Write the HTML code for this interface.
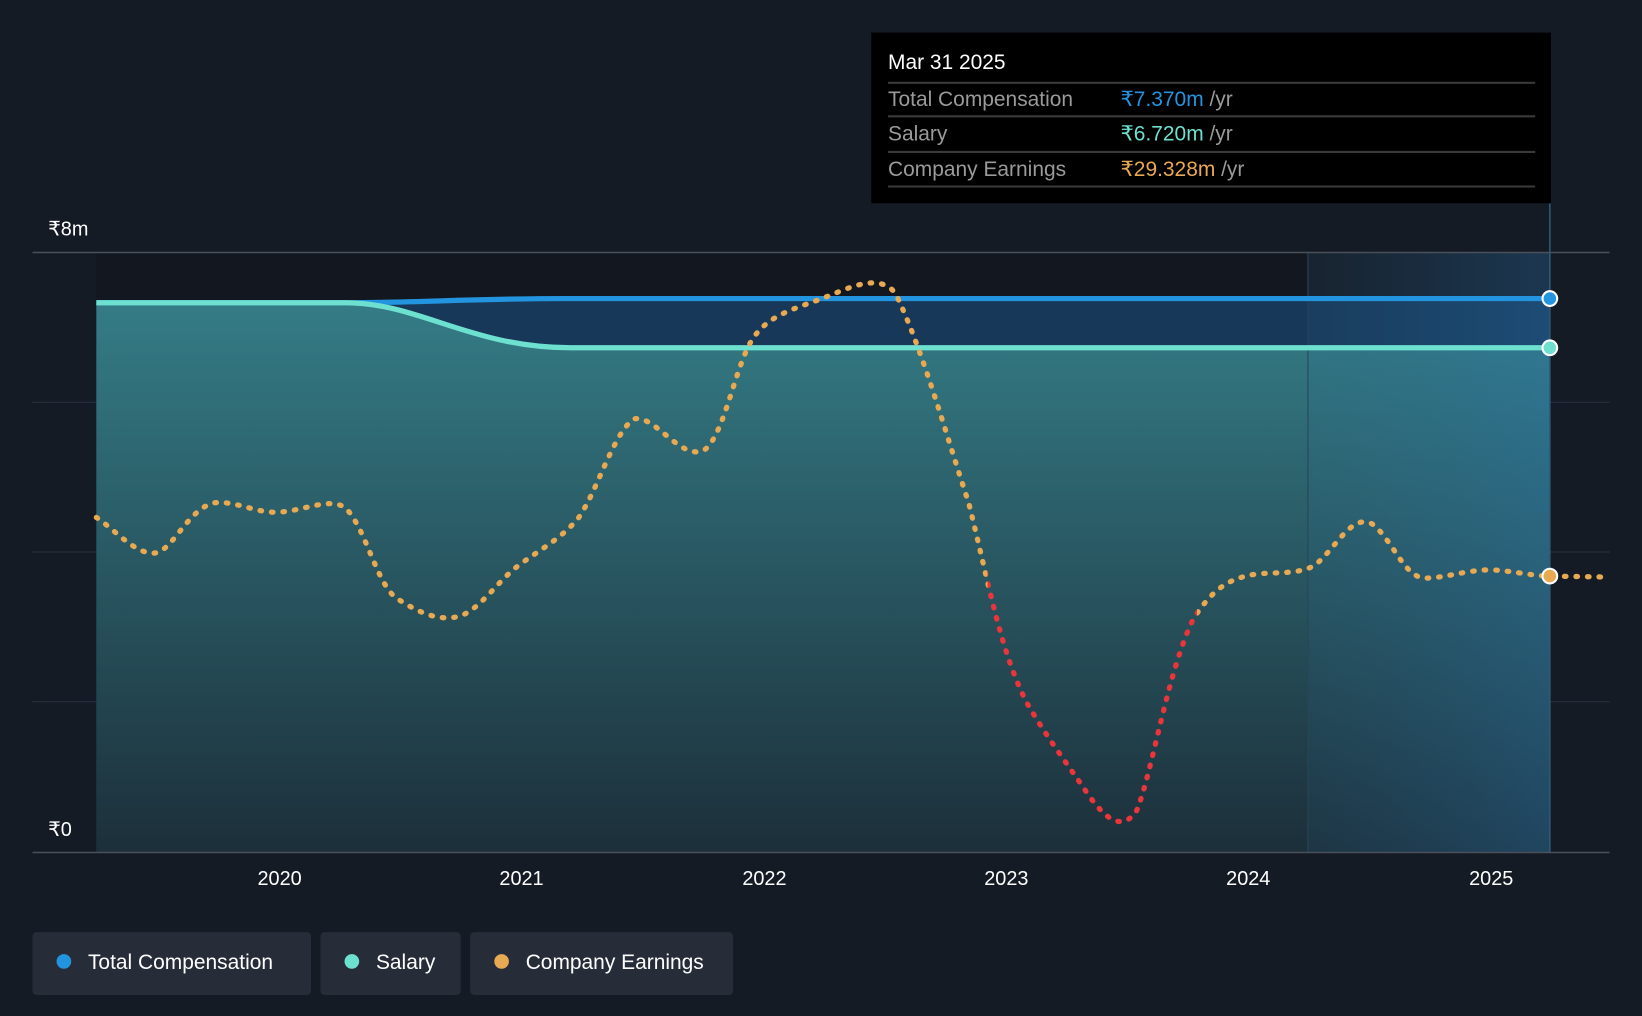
<!DOCTYPE html>
<html><head><meta charset="utf-8"><style>
html,body{margin:0;padding:0;background:#151b24;}
svg{display:block;}
text{font-family:"Liberation Sans",sans-serif;}
</style></head><body>
<svg width="1642" height="1016" viewBox="0 0 1568 970" xmlns="http://www.w3.org/2000/svg">
<defs>
<linearGradient id="sal" x1="0" y1="0" x2="0" y2="1">
<stop offset="0" stop-color="#347c86"/><stop offset="1" stop-color="#1c2f3a"/></linearGradient>
<linearGradient id="hl" x1="0" y1="0" x2="1" y2="0">
<stop offset="0" stop-color="#2a6ea0" stop-opacity="0.1"/><stop offset="1" stop-color="#2a7ab8" stop-opacity="0.3"/></linearGradient>
<clipPath id="red" clipPathUnits="userSpaceOnUse"><rect x="943" y="0" width="200" height="970"/></clipPath>
<clipPath id="org" clipPathUnits="userSpaceOnUse"><rect x="0" y="0" width="943" height="970"/><rect x="1143" y="0" width="425" height="970"/></clipPath>
</defs>
<rect width="1568" height="970" fill="#151b24"/>
<rect x="92" y="241" width="1157" height="573" fill="#131820"/>
<g stroke="#2a3340" stroke-width="1">
<line x1="31" y1="384" x2="1537" y2="384"/><line x1="31" y1="527" x2="1537" y2="527"/><line x1="31" y1="670" x2="1537" y2="670"/>
</g>
<path d="M92 289 L330 289 C400 289 450 285 540 285 L1480 285 L1480 814 L92 814Z" fill="#173858"/>
<path d="M92 289 L330 289 C400 289 450 332 545 332 L1480 332 L1480 814 L92 814Z" fill="url(#sal)"/>
<rect x="1249" y="241" width="231" height="573" fill="url(#hl)"/>
<line x1="1249" y1="241" x2="1249" y2="814" stroke="#2a4458"/>
<line x1="31" y1="241" x2="1537" y2="241" stroke="#4a505a" stroke-width="1.5"/>
<line x1="31" y1="814" x2="1537" y2="814" stroke="#4a505a" stroke-width="1.5"/>
<line x1="1480" y1="194" x2="1480" y2="814" stroke="#2e5a78" stroke-width="1.5"/>
<path d="M92 289 L330 289 C400 289 450 285 540 285 L1480 285" fill="none" stroke="#2394e0" stroke-width="5"/>
<path d="M92 289 L330 289 C400 289 450 332 545 332 L1480 332" fill="none" stroke="#6de0d0" stroke-width="5"/>
<g fill="none" stroke-width="5" stroke-linecap="round" stroke-dasharray="1.5 9.5">
<g clip-path="url(#org)">
<path d="M92 494 C110 506 130 530 148 528 C165 526 180 485 205 480 C225 478 245 490 265 489 C290 488 315 474 330 485 C350 505 360 560 380 572 C400 585 420 594 440 588 C460 580 475 555 495 540 C515 525 535 515 552 495 C570 470 585 415 605 400 C625 395 650 440 672 430 C690 418 700 360 715 330 C730 300 760 295 790 283 C810 275 840 260 855 280 C880 330 905 420 925 480 C945 560 955 620 980 670 C1000 705 1020 730 1040 760 C1055 780 1070 795 1085 775 C1100 740 1115 640 1140 590 C1160 560 1175 552 1200 548 C1225 546 1240 548 1255 540 C1275 525 1290 490 1310 500 C1330 515 1340 550 1360 552 C1380 552 1400 544 1425 544 C1450 546 1465 550 1480 550 L1537 551" stroke="#e8a953"/>
</g>
<g clip-path="url(#red)">
<path d="M92 494 C110 506 130 530 148 528 C165 526 180 485 205 480 C225 478 245 490 265 489 C290 488 315 474 330 485 C350 505 360 560 380 572 C400 585 420 594 440 588 C460 580 475 555 495 540 C515 525 535 515 552 495 C570 470 585 415 605 400 C625 395 650 440 672 430 C690 418 700 360 715 330 C730 300 760 295 790 283 C810 275 840 260 855 280 C880 330 905 420 925 480 C945 560 955 620 980 670 C1000 705 1020 730 1040 760 C1055 780 1070 795 1085 775 C1100 740 1115 640 1140 590 C1160 560 1175 552 1200 548 C1225 546 1240 548 1255 540 C1275 525 1290 490 1310 500 C1330 515 1340 550 1360 552 C1380 552 1400 544 1425 544 C1450 546 1465 550 1480 550 L1537 551" stroke="#e8363c"/>
</g>
</g>
<circle cx="1480" cy="285" r="7" fill="#2394e0" stroke="#fff" stroke-width="2"/>
<circle cx="1480" cy="332" r="7" fill="#6de0d0" stroke="#fff" stroke-width="2"/>
<circle cx="1480" cy="550" r="7" fill="#e8a953" stroke="#fff" stroke-width="2"/>
<text x="46" y="225" fill="#fff" font-size="19">₹8m</text>
<text x="46" y="798" fill="#fff" font-size="19">₹0</text>
<g fill="#fff" font-size="19" text-anchor="middle">
<text x="267" y="845">2020</text><text x="498" y="845">2021</text><text x="730" y="845">2022</text>
<text x="961" y="845">2023</text><text x="1192" y="845">2024</text><text x="1424" y="845">2025</text>
</g>
<rect x="832" y="31" width="649" height="163" fill="#000"/>
<text x="848" y="66" fill="#fff" font-size="20">Mar 31 2025</text>
<g stroke="#3a3a3a" stroke-width="2"><line x1="848" y1="79" x2="1466" y2="79"/><line x1="848" y1="111" x2="1466" y2="111"/><line x1="848" y1="145" x2="1466" y2="145"/><line x1="848" y1="178" x2="1466" y2="178"/></g>
<g font-size="20" fill="#9a9a9a">
<text x="848" y="101">Total Compensation</text><text x="848" y="134">Salary</text><text x="848" y="168">Company Earnings</text>
<text x="1070" y="101"><tspan fill="#2394e0">₹7.370m</tspan> /yr</text>
<text x="1070" y="134"><tspan fill="#6de0d0">₹6.720m</tspan> /yr</text>
<text x="1070" y="168"><tspan fill="#e8a953">₹29.328m</tspan> /yr</text>
</g>
<g font-size="20" fill="#fff">
<rect x="31" y="890" width="266" height="60" rx="4" fill="#272d38"/>
<circle cx="61" cy="918" r="7" fill="#2394e0"/><text x="84" y="925">Total Compensation</text>
<rect x="306" y="890" width="134" height="60" rx="4" fill="#272d38"/>
<circle cx="336" cy="918" r="7" fill="#6de0d0"/><text x="359" y="925">Salary</text>
<rect x="449" y="890" width="251" height="60" rx="4" fill="#272d38"/>
<circle cx="479" cy="918" r="7" fill="#e8a953"/><text x="502" y="925">Company Earnings</text>
</g>
</svg>
</body></html>
